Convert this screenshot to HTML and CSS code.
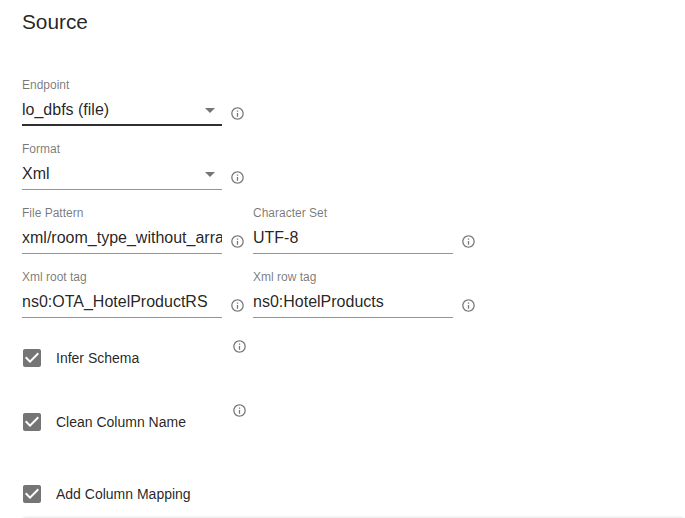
FILE: index.html
```html
<!DOCTYPE html>
<html lang="en">
<head>
<meta charset="utf-8">
<title>Source</title>
<link rel="stylesheet" href="styles.css">
</head>
<body>
<svg class="defs" aria-hidden="true">
  <symbol id="info" viewBox="0 0 24 24"><path d="M11 7h2v2h-2zm0 4h2v6h-2zm1-9C6.480 2 2 6.480 2 12s4.480 10 10 10 10-4.480 10-10S17.520 2 12 2zm0 18c-4.410 0-8-3.590-8-8s3.590-8 8-8 8 3.590 8 8-3.590 8-8 8z"/></symbol>
  <symbol id="arrow" viewBox="0 0 24 24"><path d="M7 10l5 5 5-5z"/></symbol>
  <symbol id="check" viewBox="0 0 24 24"><path d="M19 3H5c-1.110 0-2 .9-2 2v14c0 1.100.890 2 2 2h14c1.110 0 2-.9 2-2V5c0-1.100-.890-2-2-2zm-9 14l-5-5 1.410-1.410L10 14.170l7.590-7.590L19 8l-9 9z"/></symbol>
</svg>
<main class="panel">
  <h1 class="title">Source</h1>
  <div class="row">
    <div class="field focused"><label class="label">Endpoint</label><div class="select"><span class="value">lo_dbfs (file)</span><svg class="icon"><use href="#arrow"/></svg></div></div>
    <svg class="info"><use href="#info"/></svg>
  </div>
  <div class="row">
    <div class="field"><label class="label">Format</label><div class="select"><span class="value">Xml</span><svg class="icon"><use href="#arrow"/></svg></div></div>
    <svg class="info"><use href="#info"/></svg>
  </div>
  <div class="row">
    <div class="field"><label class="label">File Pattern</label><div class="select"><span class="value">xml/room_type_without_arra</span></div></div>
    <svg class="info"><use href="#info"/></svg>
    <div class="field"><label class="label">Character Set</label><div class="select"><span class="value">UTF-8</span></div></div>
    <svg class="info"><use href="#info"/></svg>
  </div>
  <div class="row">
    <div class="field"><label class="label">Xml root tag</label><div class="select"><span class="value">ns0:OTA_HotelProductRS</span></div></div>
    <svg class="info"><use href="#info"/></svg>
    <div class="field"><label class="label">Xml row tag</label><div class="select"><span class="value">ns0:HotelProducts</span></div></div>
    <svg class="info"><use href="#info"/></svg>
  </div>
  <div class="option">
    <div class="check"><svg class="icon"><use href="#check"/></svg><span>Infer Schema</span></div>
    <svg class="info"><use href="#info"/></svg>
  </div>
  <div class="option">
    <div class="check"><svg class="icon"><use href="#check"/></svg><span>Clean Column Name</span></div>
    <svg class="info"><use href="#info"/></svg>
  </div>
  <div class="option last">
    <div class="check"><svg class="icon"><use href="#check"/></svg><span>Add Column Mapping</span></div>
  </div>
  <div class="divider"></div>
</main>
</body>
</html>
```
FILE: styles.css
```css
* { box-sizing: border-box; }
body {
  margin: 0;
  background: #fff;
  color: rgba(0, 0, 0, .87);
  font-family: "Liberation Sans", Arial, sans-serif;
  overflow: hidden;
}
.defs { display: none; }
.panel { height: 518px; padding: 6px 0 0 22px; overflow: hidden; }
.title {
  margin: 0 0 40px;
  font-size: 20.8px;
  font-weight: 400;
  line-height: 32px;
}
.row { display: flex; height: 64px; }
.field {
  width: 200px;
  height: 48px;
  padding-top: 1px;
  border-bottom: 1px solid #949494;
}
.focused { border-bottom: 2px solid #303030; }
.label {
  display: block;
  height: 15px;
  font-size: 12px;
  line-height: 13px;
  color: rgba(0, 0, 0, .54);
}
.select { display: flex; height: 30px; overflow: hidden; }
.value {
  flex: 1;
  padding-top: 6px;
  font-size: 16px;
  line-height: 19px;
  white-space: nowrap;
}
.icon { width: 24px; height: 24px; flex: none; fill: #757575; }
.select .icon { margin-top: 4px; }
.info { width: 15px; height: 15px; flex: none; fill: #757575; }
.row .info { margin: 28px 8px 0; }
.option { display: flex; height: 64px; padding-top: 4px; margin-left: -2px; }
.check {
  display: flex;
  align-items: center;
  gap: 12px;
  width: 212px;
  height: 24px;
  margin-top: 8px;
  font-size: 14px;
  line-height: 20px;
}
.option .info { margin-top: 1px; }
.option.last { height: 56px; padding-top: 12px; }
.divider {
  height: 3px;
  margin-right: 1px;
  border-radius: 4px 4px 0 0;
  box-shadow: 0 0 3px rgba(0, 0, 0, .2);
}
```
